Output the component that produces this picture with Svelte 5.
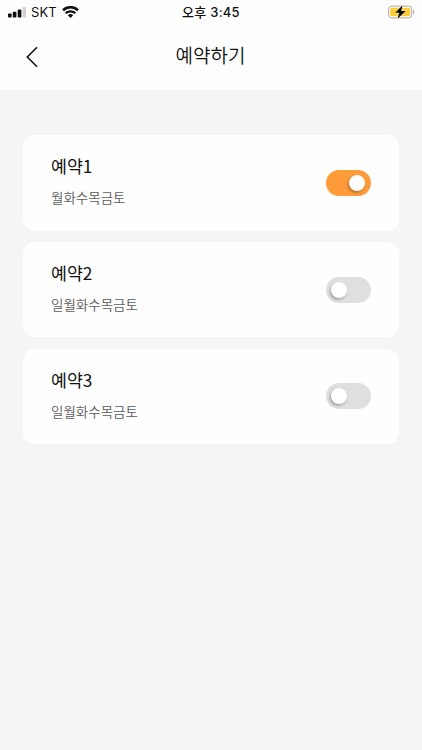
<script>
  let reservations = $state([
    { name: '예약1', days: '월화수목금토', on: true },
    { name: '예약2', days: '일월화수목금토', on: false },
    { name: '예약3', days: '일월화수목금토', on: false }
  ]);
</script>

<div class="screen">
  <header>
    <div class="status">
      <div class="carrier">
        <svg width="18" height="11" viewBox="0 0 18 11">
          <rect x="0" y="6.5" width="3.6" height="4" rx=".7" fill="#111" />
          <rect x="4.8" y="4.8" width="3.6" height="5.7" rx=".7" fill="#111" />
          <rect x="9.7" y="2.4" width="3.7" height="8.1" rx=".7" fill="#111" />
          <rect x="14.6" y="0" width="3.4" height="10.5" rx=".7" fill="#cfcfcf" />
        </svg>
        <span>SKT</span>
        <svg class="wifi" width="17" height="12" viewBox="0 0 17 12" fill="none" stroke="#111">
          <path d="M1 4.2A10.8 10.8 0 0 1 16 4.2" stroke-width="2.6" />
          <path d="M3.7 7.2A7 7 0 0 1 13.3 7.2" stroke-width="2.3" />
          <path d="M8.5 12 5.8 9.3A4 4 0 0 1 11.2 9.3Z" fill="#111" stroke="none" />
        </svg>
      </div>
      <time>오후 3:45</time>
      <svg class="battery" width="27" height="14" viewBox="0 0 27 14">
        <rect x=".6" y="1.1" width="23.2" height="11.8" rx="3.4" fill="#fff" stroke="#a9a9a9" />
        <rect x="2.2" y="2.7" width="20" height="8.6" rx="1.8" fill="#fc3" />
        <path d="M25 5c1.7.6 1.7 3.4 0 4z" fill="#aaa" />
        <path d="M14.6.2 7.2 7.8h4L9.6 13.8l8.1-7.9h-4.5z" fill="#080808" stroke="#fff" stroke-width=".6" paint-order="stroke" />
      </svg>
    </div>
    <div class="nav">
      <button class="back" aria-label="뒤로">
        <svg width="12" height="22" viewBox="0 0 12 22" fill="none" stroke="#111" stroke-width="1.6">
          <path d="M11 1.3 1.3 11 11 20.7" />
        </svg>
      </button>
      <h1>예약하기</h1>
    </div>
  </header>
  <main>
    {#each reservations as item}
      <section class="card">
        <div class="info">
          <h2>{item.name}</h2>
          <p>{item.days}</p>
        </div>
        <button
          class="toggle"
          class:on={item.on}
          role="switch"
          aria-checked={item.on}
          aria-label={item.name}
          onclick={() => (item.on = !item.on)}
        >
          <span></span>
        </button>
      </section>
    {/each}
  </main>
</div>

<style>
  :global(body) {
    margin: 0;
    background: #f5f5f5;
  }
  .screen {
    box-sizing: border-box;
    height: 750px;
    overflow: hidden;
    background: #f5f5f5;
    color: #111;
    font-family: 'Noto Sans CJK KR', sans-serif;
  }
  header {
    height: 90px;
    background: #fefefe;
  }
  .status {
    display: grid;
    grid-template-columns: 1fr auto 1fr;
    height: 24px;
    align-items: center;
    padding: 0 7px 0 8px;
  }
  .carrier {
    display: flex;
    align-items: center;
    font: 13px/24px Inter, sans-serif;
  }
  .carrier span {
    margin-left: 5px;
    letter-spacing: 0.1px;
  }
  .wifi {
    margin-left: 5px;
  }
  time {
    margin-right: 1px;
    font: 500 13px/24px Inter, 'Noto Sans CJK KR', sans-serif;
    letter-spacing: 0.25px;
  }
  .battery {
    justify-self: end;
  }
  .nav {
    display: grid;
    grid-template-columns: 60px 1fr 60px;
    align-items: center;
    height: 62px;
  }
  button {
    border: 0;
    padding: 0;
    background: none;
    cursor: pointer;
  }
  .back {
    display: flex;
    padding: 3px 0 0 26px;
  }
  h1 {
    margin: 0 1px 1px 0;
    text-align: center;
    font-size: 19px;
    line-height: 28px;
    font-weight: 350;
  }
  main {
    display: flex;
    flex-direction: column;
    gap: 11.3px;
    padding: 45px 23px 0;
  }
  .card {
    box-sizing: border-box;
    display: flex;
    align-items: center;
    justify-content: space-between;
    height: 95.5px;
    padding: 0 28px;
    border-radius: 12px;
    background: #fefefe;
  }
  .info {
    padding-bottom: 4px;
  }
  h2 {
    margin: 0;
    font-size: 17.3px;
    line-height: 26px;
    font-weight: 400;
  }
  p {
    margin: 7px 0 0;
    font-size: 13.5px;
    line-height: 22px;
    font-weight: 350;
    color: #5c5c5c;
  }
  .toggle {
    box-sizing: border-box;
    display: flex;
    align-items: center;
    width: 45px;
    height: 26px;
    padding: 0 6px 0 5px;
    border-radius: 13px;
    background: #dfdfdf;
  }
  .toggle span {
    width: 16px;
    height: 16px;
    border-radius: 50%;
    background: #fff;
    box-shadow: -1px 1.5px 3px rgba(0, 0, 0, 0.3);
  }
  .toggle.on {
    justify-content: flex-end;
    background: #ff9b38;
  }
</style>
